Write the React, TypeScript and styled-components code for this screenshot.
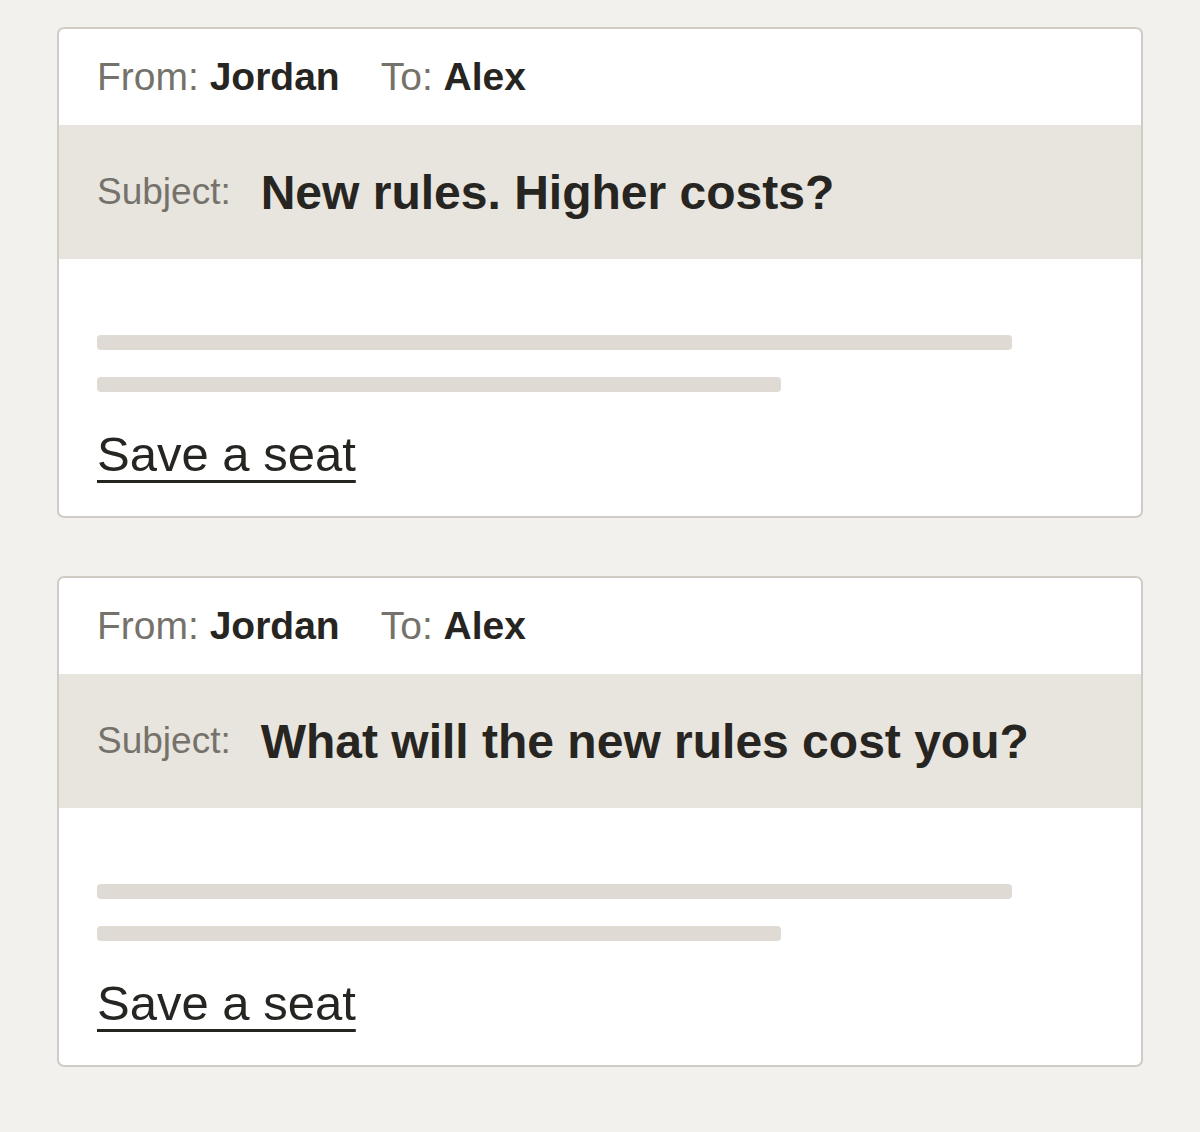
import styled, { createGlobalStyle } from "styled-components";

const GlobalStyle = createGlobalStyle`
  html, body {
    margin: 0;
    padding: 0;
    background-color: #f2f1ed;
    font-family: "Liberation Sans", Arial, Helvetica, sans-serif;
  }
`;

const S = {
  Page: styled.main`
    display: flex;
    flex-direction: column;
    align-items: center;
    gap: 58px;
    padding: 27px 59px 64px;
    min-height: 1132px;
    box-sizing: border-box;
  `,
  Card: styled.article`
    width: 100%;
    background-color: #fff;
    border: 2px solid #d0ccc5;
    border-radius: 7px;
    overflow: hidden;
  `,
  Header: styled.div`
    display: flex;
    align-items: center;
    gap: 41px;
    height: 96px;
    padding: 0 38px;
    font-size: 39px;
  `,
  Field: styled.span`
    color: #75726b;
    white-space: pre;
  `,
  Name: styled.b`
    color: #272521;
    font-weight: 700;
  `,
  SubjectRow: styled.div`
    display: flex;
    align-items: center;
    gap: 30px;
    height: 134px;
    padding: 0 38px;
    background-color: #e8e4de;
  `,
  SubjectLabel: styled.span`
    color: #75726b;
    font-size: 37px;
  `,
  SubjectText: styled.h2`
    margin: 0;
    color: #272521;
    font-size: 48px;
    font-weight: 700;
  `,
  Body: styled.div`
    display: flex;
    flex-direction: column;
    padding: 76px 38px 34px;
  `,
  Line: styled.div<{ $w: string }>`
    width: ${(p) => p.$w};
    height: 15px;
    margin-bottom: 27px;
    border-radius: 4px;
    background-color: #dfdbd4;
  `,
  Link: styled.a`
    align-self: flex-start;
    margin-top: 7px;
    color: #272521;
    font-size: 49px;
    line-height: 56px;
    text-decoration: underline;
    text-decoration-thickness: 3px;
    text-underline-offset: 9px;
  `,
};

const emails = [
  { subject: "New rules. Higher costs?" },
  { subject: "What will the new rules cost you?" },
];

const EmailCard = ({ subject }: { subject: string }) => {
  return (
    <S.Card>
      <S.Header>
        <S.Field>
          From: <S.Name>Jordan</S.Name>
        </S.Field>
        <S.Field>
          To: <S.Name>Alex</S.Name>
        </S.Field>
      </S.Header>
      <S.SubjectRow>
        <S.SubjectLabel>Subject:</S.SubjectLabel>
        <S.SubjectText>{subject}</S.SubjectText>
      </S.SubjectRow>
      <S.Body>
        <S.Line $w="91%" />
        <S.Line $w="68%" />
        <S.Link href="#">Save a seat</S.Link>
      </S.Body>
    </S.Card>
  );
};

const App = () => {
  return (
    <>
      <GlobalStyle />
      <S.Page>
        {emails.map((e) => (
          <EmailCard key={e.subject} subject={e.subject} />
        ))}
      </S.Page>
    </>
  );
};

export default App;
